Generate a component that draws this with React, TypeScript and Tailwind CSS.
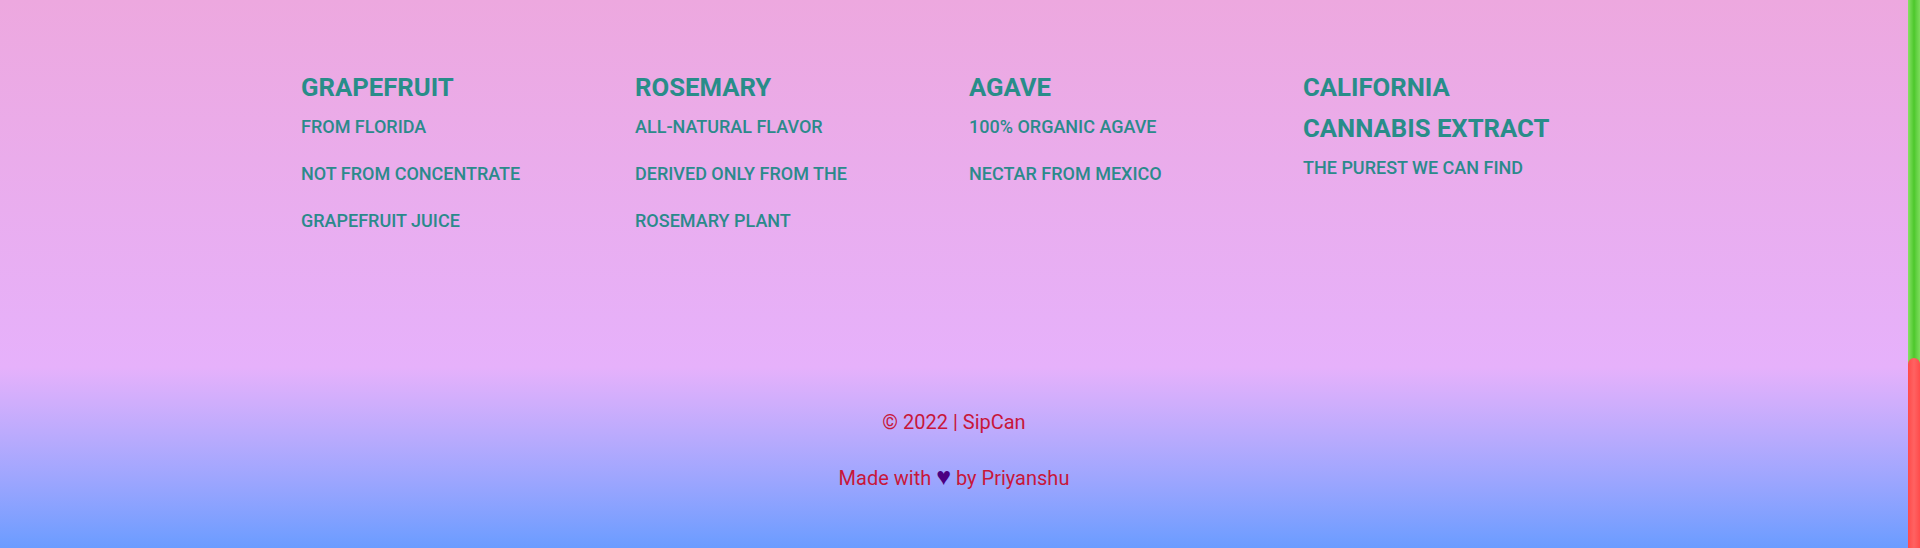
const flavors = [
  { title: ["GRAPEFRUIT"], lines: ["FROM FLORIDA", "NOT FROM CONCENTRATE", "GRAPEFRUIT JUICE"] },
  { title: ["ROSEMARY"], lines: ["ALL-NATURAL FLAVOR", "DERIVED ONLY FROM THE", "ROSEMARY PLANT"] },
  { title: ["AGAVE"], lines: ["100% ORGANIC AGAVE", "NECTAR FROM MEXICO"] },
  { title: ["CALIFORNIA", "CANNABIS EXTRACT"], lines: ["THE PUREST WE CAN FIND"] },
];

export default function App() {
  return (
    <div className="flex h-[548px] w-full overflow-hidden font-['Roboto',sans-serif]">
      <div className="flex min-w-0 flex-1 flex-col">
        <section className="h-[367px] bg-gradient-to-b from-[#eda8df] to-[#e6b1fb] pt-[67px] pl-[301px]">
          <div className="grid grid-cols-[repeat(4,334px)]">
            {flavors.map((f) => (
              <div key={f.title[0]}>
                <h2 className="mb-[4.5px] text-[25.7px] leading-[41px] font-bold text-[#288d89]">
                  {f.title.map((t) => (
                    <span key={t} className="block">
                      {t}
                    </span>
                  ))}
                </h2>
                {f.lines.map((line) => (
                  <p key={line} className="mb-[20px] text-[18px] leading-[27px] font-medium text-[#2b8a8b]">
                    {line}
                  </p>
                ))}
              </div>
            ))}
          </div>
        </section>
        <footer className="flex h-[181px] flex-col items-center bg-gradient-to-b from-[#e6b1fb] to-[#6a9cff] pt-[40px] text-[20px] leading-[30px] text-[#c8173a]">
          <p>© 2022 | SipCan</p>
          <p className="mt-[25px]">
            Made with <span className="text-[25px] leading-[30px] text-[#4b0082]">♥</span> by Priyanshu
          </p>
        </footer>
      </div>
      <div className="flex w-[12px] flex-col bg-gradient-to-r from-[#86e063] via-[#4cc82a] to-[#7ddc5c]">
        <div className="h-[358px]" />
        <div className="flex-1 rounded-t-full bg-gradient-to-r from-[#ff4a4a] via-[#ff6262] to-[#ff4a4a]" />
      </div>
    </div>
  );
}
